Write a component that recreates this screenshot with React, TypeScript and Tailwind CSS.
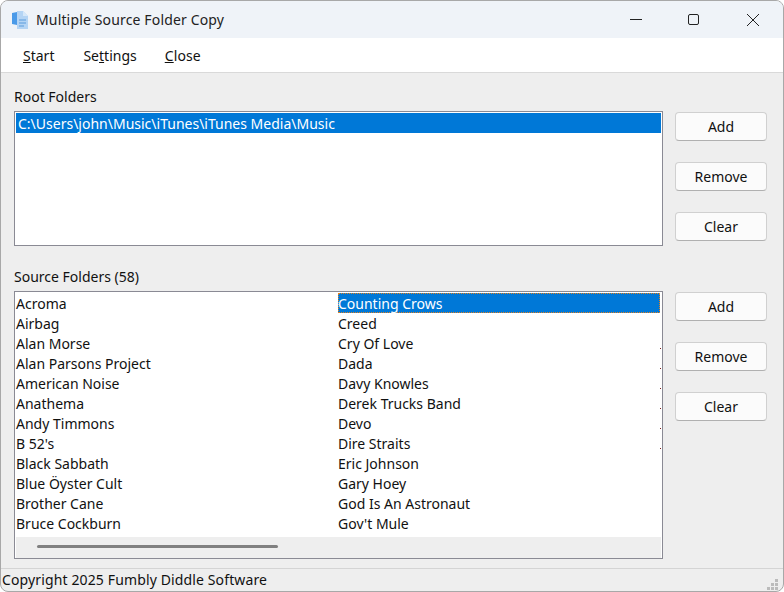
const leftBands = ["Acroma","Airbag","Alan Morse","Alan Parsons Project","American Noise","Anathema","Andy Timmons","B 52's","Black Sabbath","Blue Öyster Cult","Brother Cane","Bruce Cockburn"];
const rightBands = ["Counting Crows","Creed","Cry Of Love","Dada","Davy Knowles","Derek Trucks Band","Devo","Dire Straits","Eric Johnson","Gary Hoey","God Is An Astronaut","Gov't Mule"];

function ActionButton({ label }: { label: string }) {
  return (
    <button className="h-[29px] w-[92px] rounded-[4px] border border-[#d0d0d0] border-b-[#b0b0b0] bg-[#fbfbfb] text-[#111]">
      {label}
    </button>
  );
}

function ButtonColumn() {
  return (
    <div className="flex w-[92px] flex-col gap-[21px] pt-px">
      <ActionButton label="Add" />
      <ActionButton label="Remove" />
      <ActionButton label="Clear" />
    </div>
  );
}

function WindowIcon() {
  return (
    <svg width="18" height="20" viewBox="0 0 18 20">
      <path d="M1 3 L6 2 L6 15 L1 14 Z" fill="#4a9ae8" />
      <path d="M6 1 L12 1 L17 6 L17 19 L6 19 Z" fill="#b4d4f4" />
      <path d="M12 1 L17 6 L12 6 Z" fill="#d6e8f9" />
      <path d="M8 10 H15 M8 13 H15 M8 16 H13" stroke="#5a9cdc" strokeWidth="1.2" />
    </svg>
  );
}

function App() {
  return (
    <div
      className="flex h-[592px] w-[784px] flex-col overflow-hidden rounded-[8px] border-[1.5px] border-[#a8a8a8] bg-[#eeeeee] text-[14px] leading-5 text-[#111]"
      style={{ fontFamily: '"Noto Sans", sans-serif' }}
    >
      <header className="flex h-[37px] shrink-0 items-center bg-[#eff3f8] pl-[10px]">
        <WindowIcon />
        <span className="ml-[7px] tracking-[0.15px] text-[#222]">Multiple Source Folder Copy</span>
        <div className="ml-auto flex items-center pr-[1px]">
          <div className="flex w-[59px] justify-center pl-[2px]">
            <div className="h-px w-3 bg-[#222]" />
          </div>
          <div className="flex w-[59px] justify-center">
            <div className="size-[11px] rounded-[2px] border border-[#222]" />
          </div>
          <div className="flex w-[59px] justify-center">
            <svg width="12" height="12" viewBox="0 0 12 12">
              <path d="M0 0 L12 12 M12 0 L0 12" stroke="#222" strokeWidth="1" />
            </svg>
          </div>
        </div>
      </header>

      <nav className="flex h-[35px] shrink-0 items-center gap-[28px] border-b border-[#d9d9d9] bg-white pt-[2px] pl-[22px]">
        <span className="mr-px"><u>S</u>tart</span>
        <span>Se<u>t</u>tings</span>
        <span className="tracking-[0.1px]"><u>C</u>lose</span>
      </nav>

      <main className="flex flex-1 flex-col pt-[14px] pr-[16px] pl-[13px]">
        <div className="h-5">Root Folders</div>
        <div className="mt-[4px] flex gap-3">
          <div className="h-[135px] flex-1 border border-[#8a8a94] bg-white p-px">
            <div className="h-5 bg-[#0078d7] pl-[2px] leading-[22px] text-white">C:\Users\john\Music\iTunes\iTunes Media\Music</div>
          </div>
          <ButtonColumn />
        </div>

        <div className="mt-[21px] h-5">Source Folders (58)</div>
        <div className="mt-[4px] flex gap-3">
          <div className="flex h-[268px] flex-1 flex-col border border-[#8a8a94] bg-white">
            <div className="flex flex-1 pt-px">
              <div className="w-[323px] pl-px">
                {leftBands.map((band) => (
                  <div key={band} className="h-5 leading-[22px]">{band}</div>
                ))}
              </div>
              <div className="flex-1">
                {rightBands.map((band, i) => (
                  <div
                    key={band}
                    className={i === 0 ? "h-5 border border-dotted border-[#e08020] bg-[#0078d7] indent-[-1px] leading-[20px] text-white" : "h-5 leading-[22px]"}
                  >
                    {band}
                  </div>
                ))}
              </div>
              {/* leftover specks of the clipped third column */}
              <div className="flex w-[2px] flex-col pt-[55px]">
                {[0, 1, 2, 3, 4, 5].map((i) => (
                  <div key={i} className="mb-[19px] size-px bg-[#7a2020]" />
                ))}
              </div>
            </div>
            <div className="mx-px flex h-[21px] items-center bg-[#eeeeee] pb-[3px] pl-[21px]">
              <div className="h-[3px] w-[241px] rounded-full bg-[#808080]" />
            </div>
          </div>
          <ButtonColumn />
        </div>
      </main>

      <footer className="relative mb-[1px] flex h-[22px] shrink-0 items-center border-t border-[#d4d4d4] pl-px tracking-[0.13px]">
        Copyright 2025 Fumbly Diddle Software
        <div className="absolute right-[5px] bottom-0 grid grid-cols-3 gap-px">
          <span className="size-[3px]" />
          <span className="size-[3px]" />
          <span className="size-[3px] bg-[#bbb]" />
          <span className="size-[3px]" />
          <span className="size-[3px] bg-[#bbb]" />
          <span className="size-[3px] bg-[#bbb]" />
          <span className="size-[3px] bg-[#bbb]" />
          <span className="size-[3px] bg-[#bbb]" />
          <span className="size-[3px] bg-[#bbb]" />
        </div>
      </footer>
    </div>
  );
}

export default App;
